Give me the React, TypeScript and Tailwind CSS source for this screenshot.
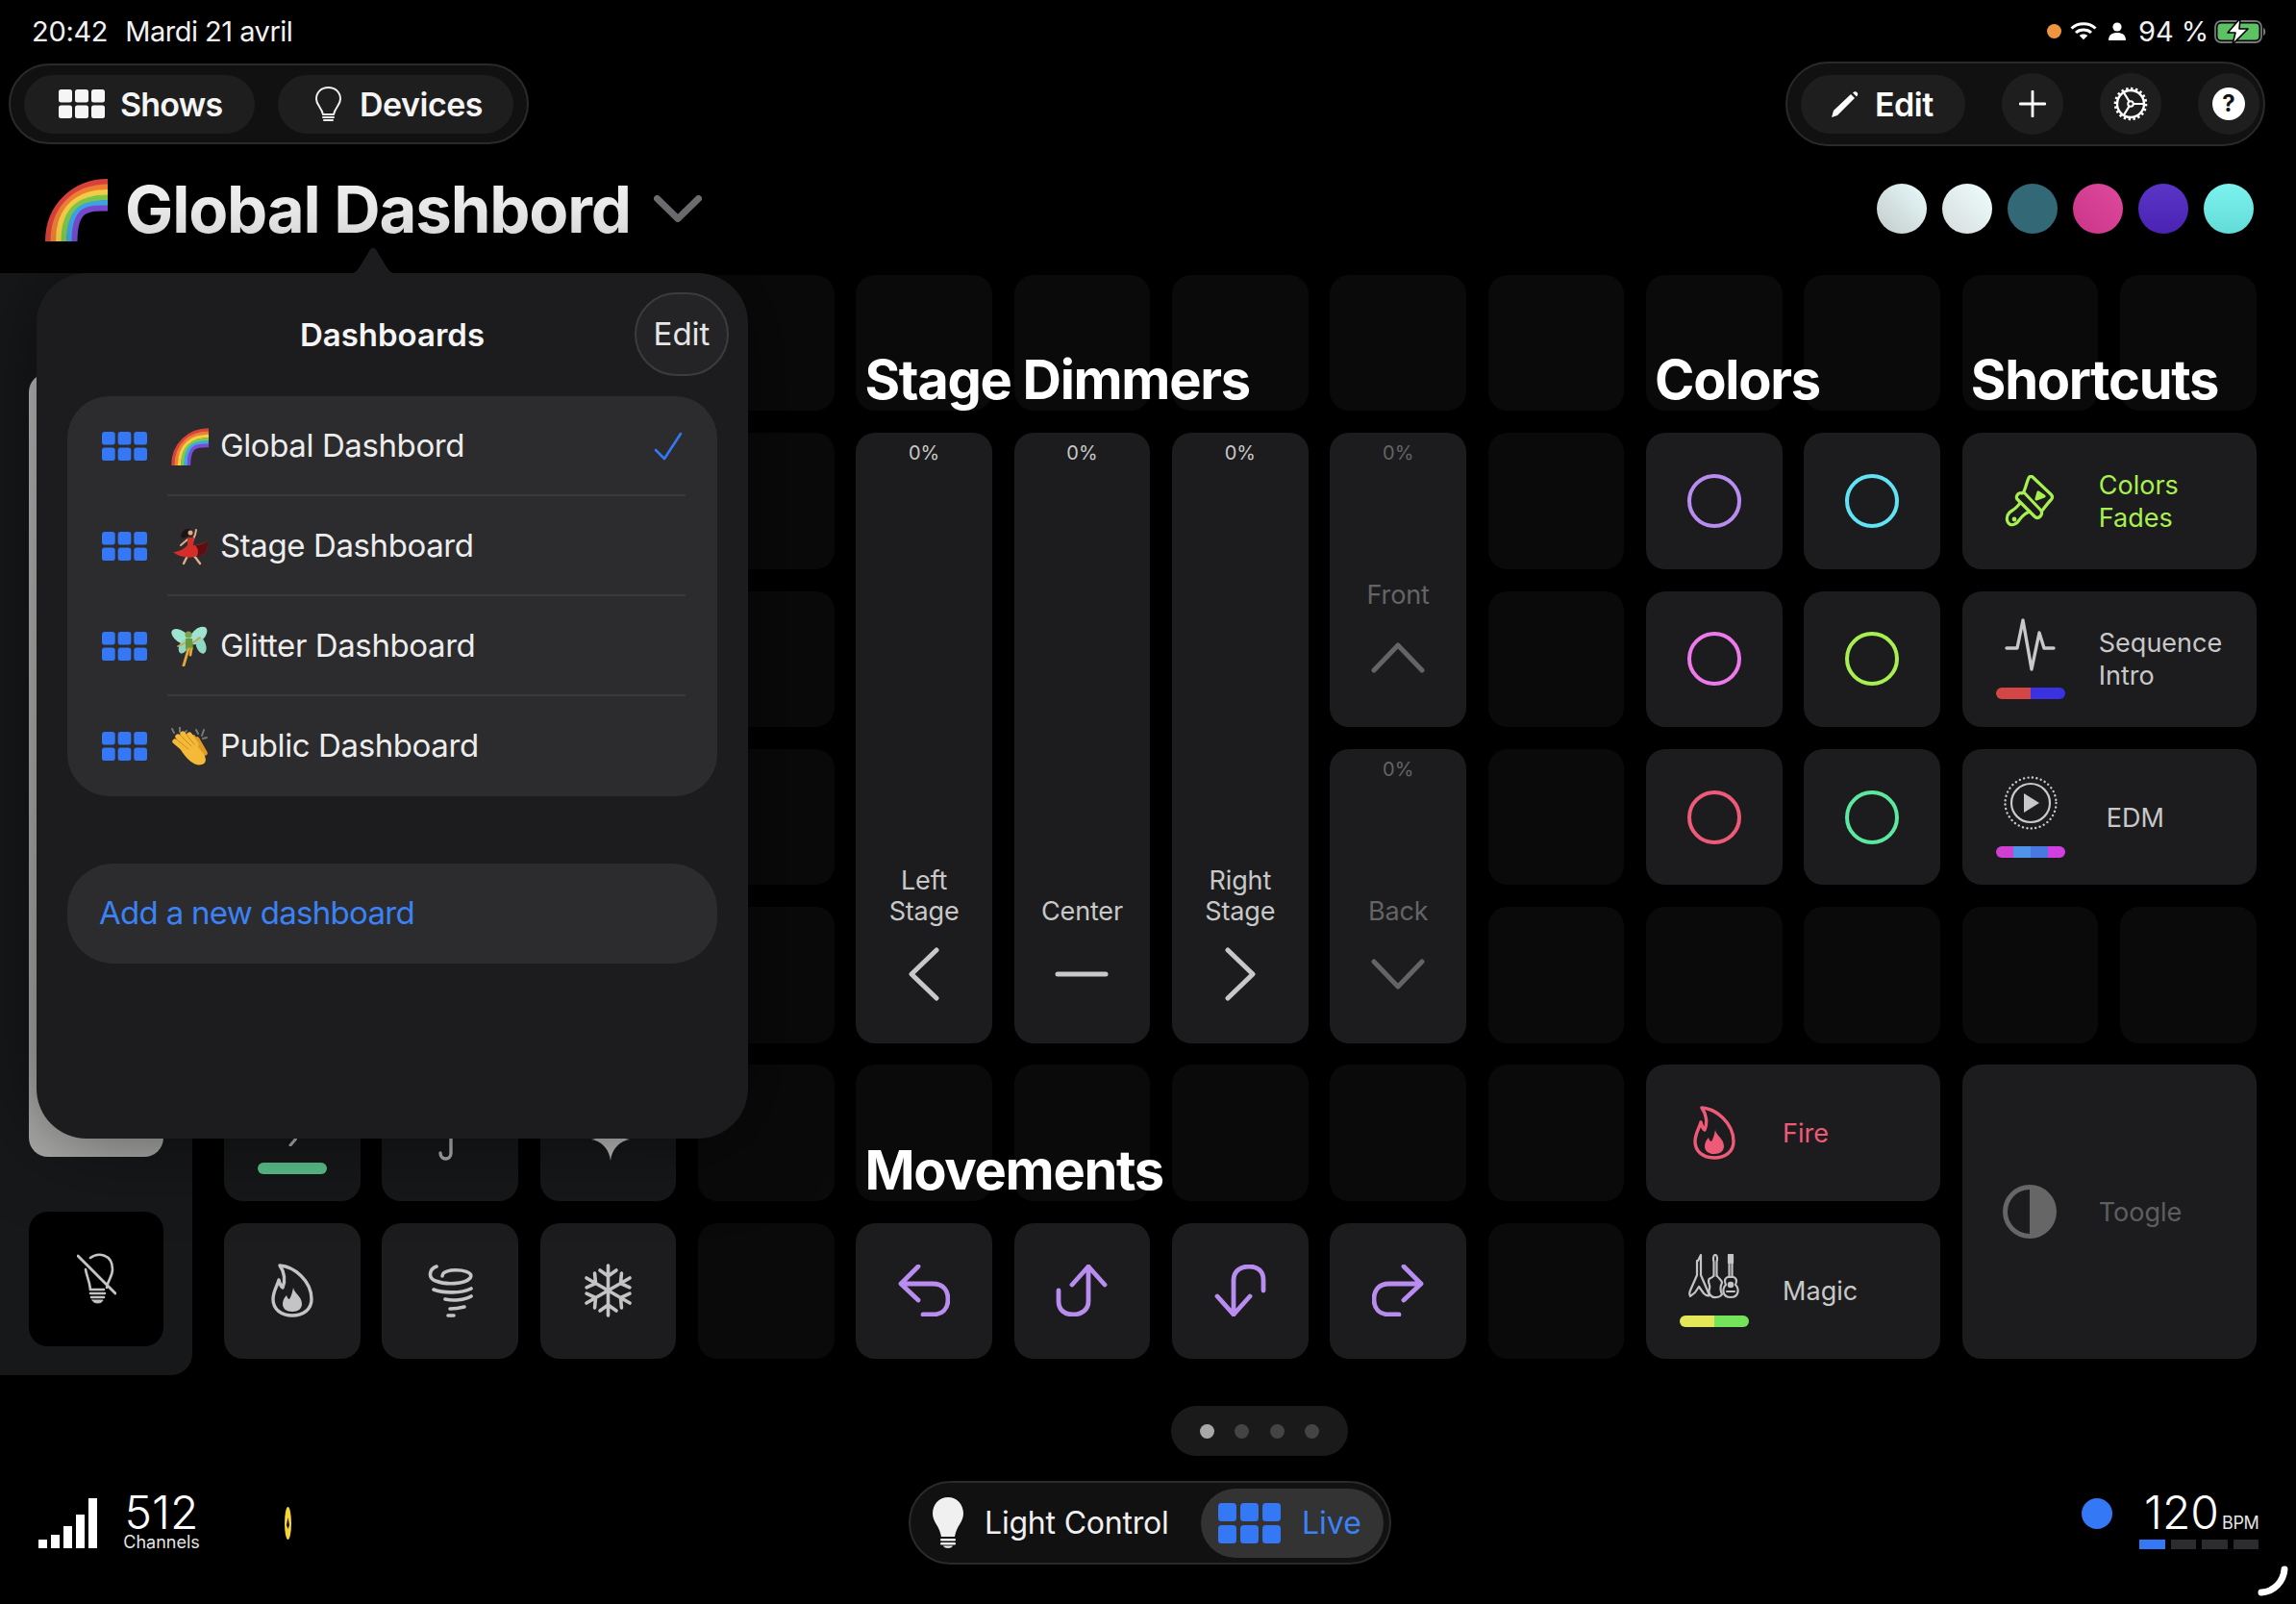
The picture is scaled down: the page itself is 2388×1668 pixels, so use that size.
import type { ReactNode } from 'react';

const BLUE = '#3478f6';

function GridGlyph({ width, height, color }: { width: number; height: number; color: string }) {
  const gap = 3;
  const w = (48 - gap * 2) / 3;
  const h = (30 - gap) / 2;
  return (
    <svg width={width} height={height} viewBox="0 0 48 30" preserveAspectRatio="none" fill={color}>
      {[0, 1, 2].map((c) =>
        [0, 1].map((r) => (
          <rect key={`${c}-${r}`} x={c * (w + gap)} y={r * (h + gap)} width={w} height={h} rx="2.5" />
        ))
      )}
    </svg>
  );
}

function Rainbow({ size }: { size: number }) {
  const bands: [number, string][] = [
    [62, '#d9413b'],
    [56.5, '#ef7f35'],
    [51, '#f5cf45'],
    [45.5, '#7cc94b'],
    [40, '#3ea6e6'],
    [34.5, '#7a4bd6'],
  ];
  return (
    <svg width={size} height={size} viewBox="0 0 67 67" fill="none">
      {bands.map(([r, color]) => (
        <path key={r} d={`M${67 - r} 67 C${67 - r} 30 ${67 - r * 0.55} ${67 - r} 67 ${67 - r}`} stroke={color} strokeWidth="6" />
      ))}
    </svg>
  );
}

function Dancer() {
  return (
    <svg width="37" height="40" viewBox="0 0 37 40" fill="none">
      <path d="M9 10 C10 4 14 1 19 2 C21 5 19 8 17 9 C14 11 12 13 9 10Z" fill="#1e1412" />
      <circle cx="19" cy="6" r="2.5" fill="#dcae8c" />
      <path d="M21 15 L24 8 L25 3 M16 13 L9 19" stroke="#dcae8c" strokeWidth="2" strokeLinecap="round" />
      <path d="M16 30 L12 38 M23 30 L29 38" stroke="#dcae8c" strokeWidth="2.4" strokeLinecap="round" />
      <path d="M16 11 L23 11 L22 19 C26 19 32 17 37 15 C38 24 34 31 26 30 C20 33 8 32 1 26 C8 26 13 22 16 19Z" fill="#d42d2a" />
      <path d="M24 19 C28 19 33 17 37 15 C38 24 34 31 26 30 C28 26 27 22 24 19Z" fill="#5c0f12" />
    </svg>
  );
}

function Fairy() {
  return (
    <svg width="40" height="42" viewBox="0 0 40 42" fill="none">
      <ellipse cx="11" cy="11" rx="11" ry="6" transform="rotate(35 11 11)" fill="#9ee4cf" />
      <ellipse cx="29" cy="10" rx="11.5" ry="6.5" transform="rotate(-45 29 10)" fill="#9ee4cf" />
      <ellipse cx="14" cy="21" rx="8" ry="4.5" transform="rotate(-65 14 21)" fill="#8fd8c4" />
      <ellipse cx="32" cy="20" rx="9" ry="5" transform="rotate(70 32 20)" fill="#8fd8c4" />
      <path d="M17 17 L8 21 M23 18 L31 12" stroke="#d0a24e" strokeWidth="1.8" strokeLinecap="round" />
      <circle cx="19" cy="9" r="3.6" fill="#7ea04a" />
      <path d="M16 13 H23 L24 24 H16Z" fill="#6a9a3f" />
      <path d="M19 24 L14 41 M22 24 L21 30" stroke="#e0a83a" strokeWidth="2.8" strokeLinecap="round" />
    </svg>
  );
}

function Clap() {
  return (
    <svg width="40" height="40" viewBox="0 0 40 40" fill="none" strokeLinecap="round">
      <path d="M4 6 L2 2 M10 5 L10 0 M14 7 L17 4 M29 7 L27 3 M33 9 L35 3 M34 12 L38 11" stroke="#77777a" strokeWidth="2" />
      <path d="M24 11 L33 24 M28 13 L36 27" stroke="#dd9b26" strokeWidth="5.5" />
      <path d="M10 22 L22 12 L34 27 C38 32 38 38 33 39 C27 41 18 36 10 22Z" fill="#f5b93a" />
      <path d="M18 26 L5 15 M20 22 L8 10 M23 19 L13 7 M27 18 L20 8" stroke="#f5b93a" strokeWidth="5.4" />
      <path d="M19 23 L8 14 M22 20 L11 9 M25 18 L17 8" stroke="#cf8c1c" strokeWidth="1" />
    </svg>
  );
}

function FlameIcon({ color }: { color: string }) {
  return (
    <svg width="44" height="56" viewBox="0 0 44 56" fill="none">
      <path
        d="M9 2 C24 3 42 18 42 37 C42 48 33 54 22 54 C11 54 2 48 2 37 C2 29 6 24 8 17 C9 21 10 24 12 25 C15 18 14 9 9 2Z"
        stroke={color}
        strokeWidth="3.4"
        strokeLinejoin="round"
      />
      <path
        d="M23 25 C24 31 32 34 32 42 C32 47 28 50 22 50 C16 50 12 47 12 42 C12 38 14 35 16 33 C17 36 18 37 19 37 C21 34 22 30 23 25Z"
        fill={color}
      />
    </svg>
  );
}

function TornadoIcon() {
  return (
    <svg width="47" height="55" viewBox="0 0 47 55" fill="none" stroke="#c4c4c4" strokeWidth="3.6" strokeLinecap="round">
      <path d="M9 2 C1 5 0 14 8 17 C18 21 38 21 44 14 C48 8 36 5 24 6 C18 7 15 9 15 12" />
      <path d="M6 26 C16 30 35 30 45 25" />
      <path d="M18 36 C26 38 38 37 45 33" />
      <path d="M23 46 C28 46 34 45 38 44" />
      <path d="M21 53 H27" />
    </svg>
  );
}

function SnowflakeIcon() {
  return (
    <svg width="55" height="60" viewBox="5 7 55 60" fill="none" stroke="#c4c4c4" strokeWidth="3.6" strokeLinecap="round" strokeLinejoin="round">
      {[0, 60, 120, 180, 240, 300].map((a) => (
        <path key={a} transform={`rotate(${a} 32.5 37)`} d="M32.5 37 V11 M24 16 L32.5 22 L41 16" />
      ))}
    </svg>
  );
}

function GuitarsIcon() {
  return (
    <svg width="57" height="47" viewBox="10 10 57 47" fill="none" stroke="#c4c4c4" strokeWidth="2.2" strokeLinejoin="round" strokeLinecap="round">
      <path d="M21 17 L24 11 V32 L33 53 C31 54 29 53 27 51 L22 44 L18 50 L13 54 C12 52 12 50 13 48 L20 32 V17Z" />
      <path d="M37.5 33 V18 C36.5 15 37 11 39 11 C41 11 41.5 15 40.5 18 V33" />
      <path d="M37 33 C35 36 32 34 32 38 C32 42 34 42 33 46 C31 51 35 56 40 55 C42 55 44 55 46 52 C44 48 44 44 46 40 C46 37 43 36 41 33" />
      <path d="M53.5 19 V34 M56.5 19 V34" />
      <rect x="53" y="11" width="4" height="8" fill="#c4c4c4" />
      <path d="M52 34 H58 C61 35 62 38 60 42 C64 46 64 55 55 55 C46 55 46 46 50 42 C48 38 49 35 52 34Z" />
      <circle cx="55" cy="42" r="2.2" fill="#c4c4c4" />
      <path d="M51 49 H59" />
    </svg>
  );
}

function BrushIcon() {
  return (
    <svg width="54" height="54" viewBox="15 13 54 54" fill="none" stroke="#a8f04f" strokeWidth="3.2" strokeLinecap="round" strokeLinejoin="round">
      <path d="M35 30 C37 26 38 20 40 16 C41 14 43 14 44 15 L63 33 C65 35 65 37 63 39 C60 42 57 46 54 50" />
      <path d="M50 31 L48 38 L56 35Z" fill="#a8f04f" />
      <path d="M33 32 C31 31 29 32 28 34 C27 36 27 37 28 38 L46 56 C48 58 50 58 52 56 C54 54 54 52 53 50 L35 31Z" />
      <path d="M31 42 C28 47 24 49 20 52 C16 56 17 62 20 64 C24 66 28 63 30 60 C33 56 35 53 41 51" />
      <circle cx="25" cy="59" r="2.4" fill="#a8f04f" stroke="none" />
    </svg>
  );
}

function BulbOff() {
  return (
    <svg width="41" height="54" viewBox="0 0 41 54" fill="none" stroke="#c4c4c4" strokeWidth="2.6" strokeLinecap="round">
      <path d="M14 5 C22 -1 37 1 37 17 C37 25 32 28 31 36" />
      <path d="M9 17 C10 24 13 28 14 38 H28" />
      <path d="M1 3 L40 42" strokeWidth="3" />
      <path d="M14 42 H29 M15 46 H28" strokeWidth="2.6" />
      <path d="M16 49 H27 C26 53 17 53 16 49Z" fill="#c4c4c4" strokeWidth="1" />
    </svg>
  );
}

function BulbOutline() {
  return (
    <svg width="27" height="37" viewBox="0 0 27 37" fill="none" stroke="#f0f0f0" strokeWidth="2">
      <path d="M13.5 1 C6 1 1 6 1 13 C1 19 6 21 8 29 H19 C21 21 26 19 26 13 C26 6 21 1 13.5 1Z" />
      <path d="M8 32 H19 M9 35 H18" strokeLinecap="round" />
    </svg>
  );
}

function BulbFilled() {
  return (
    <svg width="32" height="53" viewBox="0 0 32 53" fill="#f0f0f0">
      <path d="M16 0 C7 0 0 7 0 17 C0 26 7 29 9 41 H23 C25 29 32 26 32 17 C32 7 25 0 16 0Z" />
      <rect x="8" y="43" width="16" height="2.6" rx="1.3" />
      <rect x="8" y="47" width="16" height="2.6" rx="1.3" />
      <path d="M11 50.4 H21 C20 53.6 12 53.6 11 50.4Z" />
    </svg>
  );
}

function Gear() {
  return (
    <svg width="36" height="36" viewBox="0 0 36 36" fill="none" stroke="#fff">
      <circle cx="18" cy="18" r="14" strokeWidth="2.4" />
      <circle cx="18" cy="18" r="16" strokeWidth="2.6" strokeDasharray="2.4 2.6" />
      <circle cx="18" cy="18" r="2.8" strokeWidth="2" />
      <path d="M20.8 18 H31 M16.6 15.6 L11 6.5 M16.6 20.4 L11 29.5" strokeWidth="2.2" />
    </svg>
  );
}

function Pencil() {
  return (
    <svg width="28" height="27" viewBox="0 0 28 27" fill="#fff">
      <path d="M0 27 L2 20 L20 3 L24 7 L6 25Z" />
      <path d="M22 1.5 C23.5 0 25.5 0 26.6 1.2 C27.6 2.4 27.4 4 26 5.4Z" />
    </svg>
  );
}

function StatusIcons() {
  return (
    <div className="flex items-center">
      <div className="h-[15px] w-[15px] rounded-full bg-[#f0953f]" />
      <svg className="ml-[9px]" width="28" height="20" viewBox="0 0 28 20" fill="none" stroke="#fff" strokeWidth="3">
        <path d="M1.5 7.5 C8 1 20 1 26.5 7.5" />
        <path d="M6 12 C10 8 18 8 22 12" />
        <path d="M14 19 L10 15 C12 13.4 16 13.4 18 15Z" fill="#fff" strokeWidth="0.5" />
      </svg>
      <svg className="ml-[12px]" width="18" height="19" viewBox="0 0 18 19" fill="#fff">
        <circle cx="9" cy="5" r="4.6" />
        <path d="M0 19 C0 13 4 11 9 11 C14 11 18 13 18 19Z" />
      </svg>
      <span className="ml-[13px] w-[69px] whitespace-nowrap text-[29px] leading-none text-[#f2f2f2]">94 %</span>
      <svg className="ml-[10px]" width="55" height="27" viewBox="0 0 55 27" fill="none">
        <rect x="1" y="3" width="48" height="22" rx="6" stroke="#77777a" strokeWidth="1.8" />
        <rect x="3.5" y="5.5" width="43" height="17" rx="4" fill="#5dc264" />
        <path d="M51 10 C54 11 54 17 51 18Z" fill="#77777a" />
        <path d="M27 0 L14 15 H22 L19 27 L35 11 H26Z" fill="#fff" stroke="#000" strokeWidth="1.6" strokeLinejoin="round" />
      </svg>
    </div>
  );
}

function Tile({ className = '', children }: { className?: string; children?: ReactNode }) {
  return <div className={`relative rounded-[20px] bg-[#1c1c1e] ${className}`}>{children}</div>;
}

function RingTile({ color, className }: { color: string; className: string }) {
  return (
    <Tile className={`flex items-center justify-center ${className}`}>
      <div className="h-[56px] w-[56px] rounded-full border-[4.5px]" style={{ borderColor: color }} />
    </Tile>
  );
}

function Section({ className, title }: { className: string; title: string }) {
  return (
    <div className={`relative z-10 flex items-end rounded-[20px] bg-[#0a0a0a] pl-[9px] ${className}`}>
      <span className="whitespace-nowrap text-[56px] leading-[64px] font-bold tracking-[-1.3px] text-white">{title}</span>
    </div>
  );
}

function Fader({ className, label, icon, dim = false }: { className: string; label: string[]; icon: ReactNode; dim?: boolean }) {
  return (
    <Tile className={`flex flex-col items-center ${className} ${dim ? 'text-[#646464]' : 'text-[#c8c8c8]'}`}>
      <span className="mt-[11px] text-[20px] leading-[20px]">0%</span>
      <div className="mt-auto flex flex-col items-center text-[27px] leading-[32px] tracking-[-0.15px]">
        {label.map((l) => (
          <span key={l}>{l}</span>
        ))}
      </div>
      <div className="mt-[21px] mb-[44px] flex h-[56px] items-center justify-center">{icon}</div>
    </Tile>
  );
}

function ShortcutTile({
  className,
  icon,
  text,
  textColor = '#c8c8c8',
  textClass = '',
  bar,
}: {
  className: string;
  icon: ReactNode;
  text: string[];
  textColor?: string;
  textClass?: string;
  bar?: string[];
}) {
  return (
    <Tile className={`flex items-center ${className}`}>
      <div className="flex w-[142px] shrink-0 flex-col items-center">
        {icon}
        {bar && (
          <div className="mt-[17px] flex h-[12px] w-[72px] overflow-hidden rounded-full">
            {bar.map((c, i) => (
              <div key={i} className="flex-1" style={{ background: c }} />
            ))}
          </div>
        )}
      </div>
      <div className={`pt-[2px] text-[27px] leading-[34px] ${textClass}`} style={{ color: textColor }}>
        {text.map((t) => (
          <div key={t}>{t}</div>
        ))}
      </div>
    </Tile>
  );
}

const chevron = { fill: 'none', strokeWidth: 5, strokeLinecap: 'round', strokeLinejoin: 'round' } as const;
const PURPLE = '#b98cf0';

function MoveArrow({ d, className }: { d: string; className: string }) {
  return (
    <Tile className={`flex items-center justify-center ${className}`}>
      <svg width="54" height="54" viewBox="0 0 54 54" fill="none" stroke={PURPLE} strokeWidth="4.8" strokeLinecap="round" strokeLinejoin="round">
        <path d={d} />
      </svg>
    </Tile>
  );
}

function DashboardGrid() {
  return (
    <div className="ml-[33px] grid grid-cols-[repeat(13,141.5px)] grid-rows-[repeat(7,141.4px)] gap-x-[22.85px] gap-y-[22.9px]">
      {/* left hand effects, partly under the popover */}
      <Tile className="col-start-1 row-start-6 flex flex-col items-center justify-end bg-[#17181a] pb-[28px]">
        <svg className="mb-[17px] ml-[1px]" width="9" height="9" viewBox="0 0 9 9" stroke="#b4b4b4" strokeWidth="3" strokeLinecap="round">
          <path d="M7.5 1.5 L2 8" />
        </svg>
        <div className="h-[12px] w-[72px] rounded-full bg-[#5fc88f]" />
      </Tile>
      <Tile className="col-start-2 row-start-6 flex items-end justify-center bg-[#17181a] pb-[42px]">
        <svg className="mr-[8px]" width="16" height="23" viewBox="0 0 16 23" fill="none" stroke="#b4b4b4" strokeWidth="3.4" strokeLinecap="round">
          <path d="M13 0 V15 C13 23 2 23 2 15" />
        </svg>
      </Tile>
      <Tile className="col-start-3 row-start-6 flex items-end justify-center bg-[#17181a] pb-[42px]">
        <svg className="ml-[6px]" width="40" height="40" viewBox="0 0 40 40" fill="#c4c4c4">
          <path d="M20 0 C21 10 30 17 40 18 C30 19 21 28 20 40 C19 28 10 19 0 18 C10 17 19 10 20 0Z" />
        </svg>
      </Tile>
      <Tile className="col-start-1 row-start-7 flex items-center justify-center">
        <FlameIcon color="#c4c4c4" />
      </Tile>
      <Tile className="col-start-2 row-start-7 flex items-center justify-center">
        <TornadoIcon />
      </Tile>
      <Tile className="col-start-3 row-start-7 flex items-center justify-center">
        <SnowflakeIcon />
      </Tile>

      <Section className="col-start-5 row-start-1" title="Stage Dimmers" />
      <Section className="col-start-10 row-start-1" title="Colors" />
      <Section className="col-start-12 row-start-1" title="Shortcuts" />
      <Section className="col-start-5 row-start-6" title="Movements" />

      <Fader
        className="col-start-5 row-start-2 row-span-4"
        label={['Left', 'Stage']}
        icon={
          <svg width="32" height="56" viewBox="0 0 32 56" stroke="#c8c8c8" {...chevron}>
            <path d="M29 3 L3 28 L29 53" />
          </svg>
        }
      />
      <Fader
        className="col-start-6 row-start-2 row-span-4"
        label={['Center']}
        icon={
          <svg width="56" height="6" viewBox="0 0 56 6" stroke="#c8c8c8" {...chevron}>
            <path d="M3 3 H53" />
          </svg>
        }
      />
      <Fader
        className="col-start-7 row-start-2 row-span-4"
        label={['Right', 'Stage']}
        icon={
          <svg width="32" height="56" viewBox="0 0 32 56" stroke="#c8c8c8" {...chevron}>
            <path d="M3 3 L29 28 L3 53" />
          </svg>
        }
      />
      <Fader
        className="col-start-8 row-start-2 row-span-2"
        label={['Front']}
        dim
        icon={
          <svg width="56" height="32" viewBox="0 0 56 32" stroke="#646464" {...chevron}>
            <path d="M3 29 L28 3 L53 29" />
          </svg>
        }
      />
      <Fader
        className="col-start-8 row-start-4 row-span-2"
        label={['Back']}
        dim
        icon={
          <svg width="56" height="32" viewBox="0 0 56 32" stroke="#646464" {...chevron}>
            <path d="M3 3 L28 29 L53 3" />
          </svg>
        }
      />

      <RingTile className="col-start-10 row-start-2" color="#b98cf0" />
      <RingTile className="col-start-11 row-start-2" color="#5fe3f5" />
      <RingTile className="col-start-10 row-start-3" color="#ee79ea" />
      <RingTile className="col-start-11 row-start-3" color="#a8f04f" />
      <RingTile className="col-start-10 row-start-4" color="#ee5a78" />
      <RingTile className="col-start-11 row-start-4" color="#5ce8a0" />

      <ShortcutTile className="col-start-12 col-span-2 row-start-2" textColor="#a8f04f" text={['Colors', 'Fades']} icon={<BrushIcon />} />
      <ShortcutTile
        className="col-start-12 col-span-2 row-start-3"
        text={['Sequence', 'Intro']}
        bar={['#d44545', '#3a32e0']}
        icon={
          <svg width="53" height="55" viewBox="0 0 53 55" fill="none" stroke="#c8c8c8" strokeWidth="3.4" strokeLinecap="round" strokeLinejoin="round">
            <path d="M2 31 H13 L19 2 L28 53 L36 15 L41 31 H51" />
          </svg>
        }
      />
      <ShortcutTile
        className="col-start-12 col-span-2 row-start-4"
        textClass="ml-[8px]"
        text={['EDM']}
        bar={['#d040d0', '#4f94e8', '#4878e0', '#d040e0']}
        icon={
          <svg width="56" height="56" viewBox="0 0 56 56" fill="none" stroke="#c8c8c8">
            <circle cx="28" cy="28" r="26.5" strokeWidth="2.4" strokeDasharray="0.1 4.4" strokeLinecap="round" />
            <circle cx="28" cy="28" r="20" strokeWidth="2.2" />
            <path d="M21 18 L37 28 L21 38Z" fill="#c8c8c8" stroke="none" />
          </svg>
        }
      />

      <ShortcutTile className="col-start-10 col-span-2 row-start-6" textColor="#ee5a78" text={['Fire']} icon={<FlameIcon color="#ee5a78" />} />
      <ShortcutTile className="col-start-10 col-span-2 row-start-7" text={['Magic']} bar={['#e4e858', '#76e45a']} icon={<GuitarsIcon />} />
      <Tile className="col-start-12 col-span-2 row-start-6 row-span-2 flex items-center pl-[42px] text-[#5e5e5e]">
        <svg width="56" height="56" viewBox="0 0 56 56" fill="none">
          <circle cx="28" cy="28" r="25.5" stroke="#666" strokeWidth="5" />
          <path d="M28 3 A25 25 0 0 1 28 53Z" fill="#666" />
        </svg>
        <span className="ml-[44px] pt-[2px] text-[27px]">Toogle</span>
      </Tile>

      <MoveArrow className="col-start-5 row-start-7" d="M21 2 L3 20 L21 37 M3 20 H36 C48 20 52 28 52 36 C52 46 46 52 36 52 H26" />
      <MoveArrow className="col-start-6 row-start-7" d="M17 21 L34 2 L51 21 M34 2 V38 C34 47 27 52 18 52 C9 52 3 47 3 38 V27" />
      <MoveArrow className="col-start-7 row-start-7" d="M37 33 L20 52 L3 33 M20 52 V16 C20 7 27 2 36 2 C45 2 51 7 51 16 V27" />
      <MoveArrow className="col-start-8 row-start-7" d="M33 2 L51 20 L33 37 M51 20 H18 C6 20 2 28 2 36 C2 46 8 52 18 52 H28" />

      {/* whatever cell is left over stays an empty slot */}
      {Array.from({ length: 41 }).map((_, i) => (
        <div key={i} className="rounded-[20px] bg-[#0a0a0a]" />
      ))}
    </div>
  );
}

const DASHBOARDS = [
  { name: 'Global Dashbord', emoji: <Rainbow size={40} /> },
  { name: 'Stage Dashboard', emoji: <Dancer /> },
  { name: 'Glitter Dashboard', emoji: <Fairy /> },
  { name: 'Public Dashboard', emoji: <Clap /> },
];

function DashboardsPopover() {
  return (
    <div className="absolute top-[284px] left-[38px] z-20 h-[900px] w-[740px] rounded-[52px] bg-[#1c1c1e] px-[32px] shadow-[0_0_90px_rgba(0,0,0,0.55)]">
      <svg className="absolute -top-[26px] left-[323px]" width="54" height="27" viewBox="0 0 54 27" fill="#1c1c1e">
        <path d="M0 27 C8 27 10 24 14 18 L23 3 C25 -1 29 -1 31 3 L40 18 C44 24 46 27 54 27Z" />
      </svg>
      <div className="relative flex h-[128px] items-start justify-center">
        <span className="mt-[44px] text-[33px] leading-[40px] font-semibold text-[#f5f5f5]">Dashboards</span>
        <div className="absolute top-[20px] -right-[12px] flex h-[87px] w-[98px] items-center justify-center rounded-full border-2 border-[#3c3c3e] bg-[#242426] text-[33px] text-[#e6e6e6]">
          Edit
        </div>
      </div>
      <div className="rounded-[44px] bg-[#2c2c2e]">
        {DASHBOARDS.map((d, i) => (
          <div key={d.name} className="flex h-[104px] items-center pl-[36px]">
            <GridGlyph width={47} height={30} color={BLUE} />
            <div
              className={`relative mr-[33px] ml-[21px] flex h-full flex-1 items-center ${i < 3 ? 'shadow-[inset_0_-2px_0_#3a3a3c]' : ''}`}
            >
              <div className="ml-[3px] flex w-[40px] justify-center">{d.emoji}</div>
              <span className="ml-[12px] text-[33px] tracking-[-0.4px] text-[#ededed]">{d.name}</span>
              {i === 0 && (
                <svg className="absolute right-[3px]" width="30" height="30" viewBox="0 0 30 30" fill="none" stroke={BLUE} strokeWidth="2.6" strokeLinecap="round" strokeLinejoin="round">
                  <path d="M2 19 L11 28 L28 2" />
                </svg>
              )}
            </div>
          </div>
        ))}
      </div>
      <div className="mt-[70px] flex h-[104px] items-center rounded-[48px] bg-[#2c2c2e] pl-[33px] text-[33px] tracking-[-0.7px] text-[#3b82f6]">Add a new dashboard</div>
    </div>
  );
}

export default function App() {
  return (
    <div className="relative h-[1668px] w-[2388px] overflow-hidden bg-black font-[Inter,sans-serif]">
      <div className="flex h-[64px] items-center justify-between pr-[30px] pl-[33px]">
        <div className="text-[29px] leading-none text-[#f2f2f2]">
          <span className="tracking-[-0.3px]">20:42</span>
          <span className="ml-[18px] tracking-[-0.5px]">Mardi 21 avril</span>
        </div>
        <StatusIcons />
      </div>

      <div className="flex h-[88px] items-center justify-between pr-[32px] pl-[9px]">
        <div className="flex h-[84px] w-[541px] items-center justify-between rounded-full border-2 border-[#2a2a2a] bg-[#111] px-[14px]">
          <div className="flex h-[61px] w-[240px] items-center rounded-full bg-[#1e1e1e] pl-[36px] text-[34px] font-semibold tracking-[-0.8px] text-[#f5f5f5]">
            <GridGlyph width={48} height={30} color="#f5f5f5" />
            <span className="ml-[16px]">Shows</span>
          </div>
          <div className="flex h-[61px] w-[245px] items-center rounded-full bg-[#1e1e1e] pl-[39px] text-[34px] font-semibold tracking-[-0.5px] text-[#f5f5f5]">
            <BulbOutline />
            <span className="ml-[19px]">Devices</span>
          </div>
        </div>
        <div className="flex h-[88px] w-[499px] items-center rounded-full border-2 border-[#2a2a2a] bg-[#111] pl-[14px]">
          <div className="flex h-[61px] w-[171px] items-center rounded-full bg-[#1e1e1e] pl-[32px] text-[34px] font-semibold tracking-[-0.5px] text-white">
            <Pencil />
            <span className="ml-[17px]">Edit</span>
          </div>
          <div className="ml-[38px] flex h-[64px] w-[64px] items-center justify-center rounded-full bg-[#1e1e1e]">
            <svg width="28" height="28" viewBox="0 0 28 28" stroke="#fff" strokeWidth="2.8" strokeLinecap="round">
              <path d="M14 1 V27 M1 14 H27" />
            </svg>
          </div>
          <div className="ml-[38px] flex h-[64px] w-[64px] items-center justify-center rounded-full bg-[#1e1e1e]">
            <Gear />
          </div>
          <div className="ml-[38px] flex h-[64px] w-[64px] items-center justify-center rounded-full bg-[#1e1e1e]">
            <div className="flex h-[34px] w-[34px] items-center justify-center rounded-full bg-white text-[24px] leading-none font-bold text-[#111]">?</div>
          </div>
        </div>
      </div>

      <div className="flex h-[134px] items-center justify-between pr-[44px] pb-[4px] pl-[45px]">
        <div className="flex items-center">
          <Rainbow size={67} />
          <h1 className="ml-[18px] text-[67px] leading-none font-bold tracking-[-1.15px] text-[#f0f0f0]">Global Dashbord</h1>
          <svg className="ml-[24px]" width="50" height="28" viewBox="0 0 50 28" fill="none" stroke="#6e6e73" strokeWidth="7" strokeLinecap="round" strokeLinejoin="round">
            <path d="M3.5 3.5 L25 24.5 L46.5 3.5" />
          </svg>
        </div>
        <div className="flex gap-[16px]">
          <div className="h-[52px] w-[52px] rounded-full bg-gradient-to-tr from-[#c4cbcb] to-[#e8fbfb]" />
          <div className="h-[52px] w-[52px] rounded-full bg-gradient-to-tr from-[#d6dcdc] to-[#effefe]" />
          <div className="h-[52px] w-[52px] rounded-full bg-[#336877]" />
          <div className="h-[52px] w-[52px] rounded-full bg-gradient-to-tr from-[#c93488] to-[#e04a9e]" />
          <div className="h-[52px] w-[52px] rounded-full bg-gradient-to-b from-[#5a35c6] to-[#4a22b4]" />
          <div className="h-[52px] w-[52px] rounded-full bg-gradient-to-b from-[#7cf2ee] to-[#62dcd8]" />
        </div>
      </div>

      <div className="flex items-start">
        <div className="-mt-[2px] flex h-[1146px] w-[200px] shrink-0 flex-col rounded-r-[22px] bg-[#17181a] pt-[104px] pl-[30px]">
          <div className="h-[815px] w-[140px] rounded-[20px] bg-gradient-to-b from-[#c9c9c9] to-[#aeaeac]" />
          <div className="mt-[57px] flex h-[140px] w-[140px] items-center justify-center rounded-[20px] bg-black">
            <BulbOff />
          </div>
        </div>
        <DashboardGrid />
      </div>

      <DashboardsPopover />

      <div className="mt-[32px] ml-[1218px] flex h-[52px] w-[184px] items-center justify-between rounded-full bg-[#1a1a1a] px-[30px]">
        <div className="h-[15px] w-[15px] rounded-full bg-[#a8a8a8]" />
        <div className="h-[15px] w-[15px] rounded-full bg-[#444]" />
        <div className="h-[15px] w-[15px] rounded-full bg-[#444]" />
        <div className="h-[15px] w-[15px] rounded-full bg-[#444]" />
      </div>

      <div className="mt-[26px] flex h-[87px] items-center">
        <div className="ml-[40px] flex h-[52px] items-end gap-[4px]">
          <div className="h-[9px] w-[9px] bg-white" />
          <div className="h-[14px] w-[9px] bg-white" />
          <div className="h-[23px] w-[9px] bg-white" />
          <div className="h-[35px] w-[9px] bg-white" />
          <div className="h-[52px] w-[9px] bg-white" />
        </div>
        <div className="ml-[27px] flex w-[80px] flex-col items-center text-white">
          <span className="text-[48px] leading-[40px] font-light">512</span>
          <span className="text-[18px] leading-[22px] text-[#e4e4e4]">Channels</span>
        </div>
        <svg className="ml-[88px]" width="7" height="34" viewBox="0 0 7 34">
          <ellipse cx="3.5" cy="17" rx="3.5" ry="17" fill="#f5d43c" />
          <path d="M3.5 11 L5 19 L3.5 23 L2 19Z" fill="#111" />
        </svg>

        <div className="ml-[642px] flex h-[87px] w-[502px] items-center rounded-full border-2 border-[#2a2a2a] bg-[#111] pr-[6px] pl-[23px]">
          <BulbFilled />
          <span className="ml-[22px] whitespace-nowrap text-[32px] tracking-[-0.2px] text-[#f0f0f0]">Light Control</span>
          <div className="ml-auto flex h-[72px] w-[190px] items-center rounded-full bg-[#333] pl-[18px]">
            <GridGlyph width={65} height={42} color={BLUE} />
            <span className="ml-[22px] text-[32px] text-[#3b82f6]">Live</span>
          </div>
        </div>

        <div className="-mt-[20px] ml-[718px] h-[32px] w-[32px] shrink-0 rounded-full bg-[#3478f6]" />
        <div className="-mt-[4px] ml-[28px] flex w-[124px] shrink-0 flex-col">
          <div className="flex items-end gap-[3px] pl-[5px] text-white">
            <span className="text-[48px] leading-[40px] font-light">120</span>
            <span className="text-[18px] leading-[18px] tracking-[-0.4px] text-[#e4e4e4]">BPM</span>
          </div>
          <div className="mt-[8px] flex gap-[6px]">
            <div className="h-[10px] flex-1 bg-[#3478f6]" />
            <div className="h-[10px] flex-1 bg-[#2c2c2e]" />
            <div className="h-[10px] flex-1 bg-[#2c2c2e]" />
            <div className="h-[10px] flex-1 bg-[#2c2c2e]" />
          </div>
        </div>
      </div>

      <svg className="absolute right-[8px] bottom-[8px]" width="32" height="32" viewBox="0 0 32 32" fill="none" stroke="#fff" strokeWidth="7" strokeLinecap="round">
        <path d="M28 4 C27 16 18 27 4 28" />
      </svg>
    </div>
  );
}
